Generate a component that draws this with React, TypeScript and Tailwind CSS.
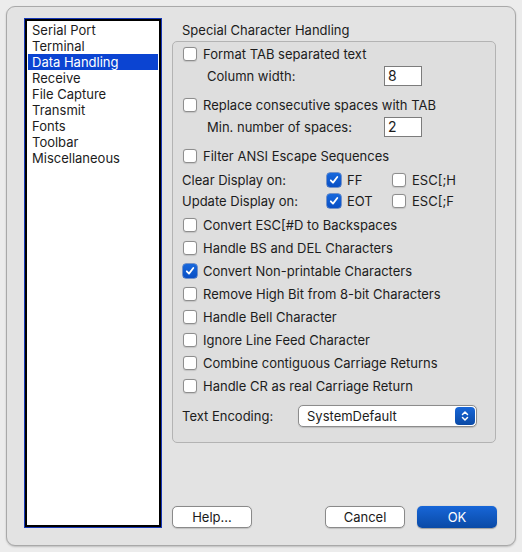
import React from 'react';

const items = [
  'Serial Port',
  'Terminal',
  'Data Handling',
  'Receive',
  'File Capture',
  'Transmit',
  'Fonts',
  'Toolbar',
  'Miscellaneous',
];

function Box({ checked = false }: { checked?: boolean }) {
  if (checked) {
    return (
      <span className="flex h-[14px] w-[14px] shrink-0 items-center justify-center rounded-[3px] bg-gradient-to-b from-[#1868dc] to-[#0a4fc4] shadow-[0_0_0_0.5px_#0a47b0]">
        <svg width="10" height="10" viewBox="0 0 10 10" fill="none">
          <path d="M1.8 5.3 L4 7.6 L8.3 2" stroke="white" strokeWidth="1.8" strokeLinecap="round" strokeLinejoin="round" />
        </svg>
      </span>
    );
  }
  return (
    <span className="h-[14px] w-[14px] shrink-0 rounded-[3px] border border-[#8e8e8e] bg-white shadow-[0_0.5px_1px_rgba(0,0,0,0.12)]" />
  );
}

function Check({ label, checked = false, className = '' }: { label: string; checked?: boolean; className?: string }) {
  return (
    <div className={`flex h-[20px] items-center gap-[6px] ${className}`}>
      <Box checked={checked} />
      <span>{label}</span>
    </div>
  );
}

function Field({ value }: { value: string }) {
  return (
    <div className="flex h-[20px] w-[38px] items-center border border-[#7c7c7c] bg-white pl-[3px] text-[14px]">
      {value}
    </div>
  );
}

function Button({ label, primary = false }: { label: string; primary?: boolean }) {
  return (
    <button
      className={
        primary
          ? 'h-[22px] w-[80px] rounded-[5px] bg-gradient-to-b from-[#1766d8] to-[#0a4aa6] text-white shadow-[0_0.5px_1px_rgba(0,0,0,0.3)]'
          : 'h-[22px] w-[80px] rounded-[5px] border border-[#8a8a8a] bg-white text-[#1a1a1a] shadow-[0_0.5px_1px_rgba(0,0,0,0.15)]'
      }
    >
      {label}
    </button>
  );
}

export default function App() {
  return (
    <div
      className="h-[552px] w-[522px] bg-[#ececec] p-[6px] text-[13px] leading-[16px] text-[#1c1c1c]"
      style={{ fontFamily: 'Inter, "Liberation Sans", sans-serif' }}
    >
      <div className="flex h-full rounded-[9px] border border-[#a9a9a9] bg-[#e3e3e3] pl-[17px] pt-[11px] shadow-[0_1px_2px_rgba(0,0,0,0.2)]">
        {/* list of categories */}
        <div className="h-[510px] w-[138px] shrink-0 bg-[#1738b8] p-px">
          <div className="h-full border-2 border-black bg-white px-px pt-px">
            {items.map(it => (
              <div
                key={it}
                className={`h-[16px] pl-[4px] ${it === 'Data Handling' ? 'bg-[#0b44d2] text-white' : ''}`}
              >
                {it}
              </div>
            ))}
          </div>
        </div>

        {/* right side */}
        <div className="ml-[10px] flex w-[325px] flex-col">
          <div className="mt-[4px] pl-[10px]">Special Character Handling</div>
          <div className="mt-[3px] flex h-[402px] w-[324px] flex-col rounded-[5px] border border-[#b3b3b3] bg-[#dedede] pl-[10px] pt-[2px]">
            <Check label="Format TAB separated text" />
            <div className="mt-[2px] flex h-[20px] items-center pl-[24px]">
              <span className="w-[177px]">Column width:</span>
              <Field value="8" />
            </div>
            <Check label="Replace consecutive spaces with TAB" className="mt-[9px]" />
            <div className="mt-[2px] flex h-[20px] items-center pl-[24px]">
              <span className="w-[177px]">Min. number of spaces:</span>
              <Field value="2" />
            </div>
            <Check label="Filter ANSI Escape Sequences" className="mt-[9px]" />
            <div className="mt-[4px] flex h-[20px] items-center -ml-px">
              <span className="w-[145px]">Clear Display on:</span>
              <Check label="FF" checked className="w-[65px]" />
              <Check label="ESC[;H" />
            </div>
            <div className="mt-[1px] flex h-[20px] items-center -ml-px">
              <span className="w-[145px]">Update Display on:</span>
              <Check label="EOT" checked className="w-[65px]" />
              <Check label="ESC[;F" />
            </div>
            <Check label="Convert ESC[#D to Backspaces" className="mt-[4px]" />
            <div className="mt-[3px] flex flex-col gap-[3px]">
              <Check label="Handle BS and DEL Characters" />
              <Check label="Convert Non-printable Characters" checked />
              <Check label="Remove High Bit from 8-bit Characters" />
              <Check label="Handle Bell Character" />
              <Check label="Ignore Line Feed Character" />
              <Check label="Combine contiguous Carriage Returns" />
              <Check label="Handle CR as real Carriage Return" />
            </div>
            <div className="mt-[9px] flex h-[22px] items-center -ml-px">
              <span className="w-[116px]">Text Encoding:</span>
              <div className="flex h-[22px] w-[179px] items-center justify-between rounded-[5px] border border-[#8c8c8c] bg-white pl-[8px] pr-px shadow-[0_0.5px_1px_rgba(0,0,0,0.15)]">
                <span>SystemDefault</span>
                <span className="flex h-[18px] w-[20px] items-center justify-center rounded-[4px] bg-gradient-to-b from-[#1766d8] to-[#0a4aa6]">
                  <svg width="8" height="12" viewBox="0 0 8 12" fill="none">
                    <path d="M1.5 4.5 L4 2 L6.5 4.5 M1.5 7.5 L4 10 L6.5 7.5" stroke="white" strokeWidth="1.5" strokeLinecap="round" strokeLinejoin="round" />
                  </svg>
                </span>
              </div>
            </div>
          </div>
          <div className="mt-[63px] flex items-center">
            <Button label="Help..." />
            <div className="flex-1" />
            <Button label="Cancel" />
            <div className="w-[12px]" />
            <Button label="OK" primary />
          </div>
        </div>
      </div>
    </div>
  );
}
